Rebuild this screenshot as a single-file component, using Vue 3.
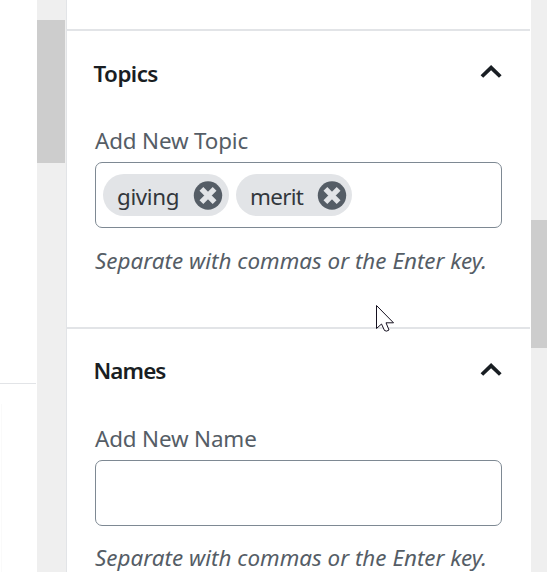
<template>
  <div class="screen">
    <!-- editor canvas, only its right edge is visible -->
    <div class="canvas">
      <div class="canvas-top"></div>
      <div class="canvas-bottom"></div>
    </div>

    <div class="scrollbar scrollbar-left">
      <div class="thumb"></div>
    </div>

    <div class="sidebar">
      <section v-for="panel in panels" :key="panel.title" class="panel" :class="panel.key">
        <button class="panel-header" @click="panel.open = !panel.open">
          <span class="panel-title">{{ panel.title }}</span>
          <svg class="arrow" :class="{ closed: !panel.open }" width="24" height="16" viewBox="0 0 24 16">
            <path d="M2.9 12.5 L12.1 3.7 L21.3 12.5" fill="none" stroke="#191e23" stroke-width="3.8" />
          </svg>
        </button>

        <div v-if="panel.open" class="panel-body">
          <label class="field-label">{{ panel.label }}</label>
          <div class="token-input">
            <span v-for="token in panel.tokens" :key="token" class="token" :class="token">
              <span class="token-text">{{ token }}</span>
              <button class="token-remove" @click="removeToken(panel, token)">
                <svg width="30" height="30" viewBox="0 0 30 30">
                  <circle cx="15" cy="15.5" r="14.2" fill="#555d66" />
                  <path d="M8.4 8.9 L21.6 22.1 M21.6 8.9 L8.4 22.1" stroke="#e2e4e7" stroke-width="5.4" />
                </svg>
              </button>
            </span>
          </div>
          <p class="help">Separate with commas or the Enter key.</p>
        </div>
      </section>
    </div>

    <div class="scrollbar scrollbar-right">
      <div class="thumb"></div>
    </div>

    <svg class="cursor" width="20" height="29" viewBox="0 0 20 29">
      <path
        d="M1.5 1.5 V24.5 L6.5 20 L9.5 26.5 Q11.5 28 14 26 L11 18.8 H18.5 Z"
        fill="#fff"
        stroke="#15101f"
        stroke-width="1"
      />
    </svg>
  </div>
</template>

<script setup>
import { reactive } from 'vue'

const panels = reactive([
  { key: 'topics', title: 'Topics', label: 'Add New Topic', tokens: ['giving', 'merit'], open: true },
  { key: 'names', title: 'Names', label: 'Add New Name', tokens: [], open: true },
])

const removeToken = (panel, token) => {
  panel.tokens = panel.tokens.filter((t) => t !== token)
}
</script>

<style>
body {
  overflow: hidden;
  background: #fff;
}
</style>

<style scoped>
.screen {
  position: relative;
  display: flex;
  width: 547px;
  height: 572px;
  overflow: hidden;
  font-family: 'Noto Sans', 'Open Sans', sans-serif;
  font-size: 22.4px;
  color: #555d66;
}

.canvas {
  width: 37px;
  flex-shrink: 0;
}

.canvas-top {
  width: 36px;
  height: 383px;
  border-bottom: 1px solid #e2e4e7;
}

.canvas-bottom {
  width: 1px;
  height: 168px;
  margin-top: 20px;
  border-right: 1px solid #fafafa;
}

.scrollbar {
  flex-shrink: 0;
  background: #efefef;
}

.thumb {
  background: #cdcdcd;
}

.scrollbar-left {
  width: 29px;
  padding-top: 20px;
  box-sizing: border-box;
}

.scrollbar-left .thumb {
  width: 28px;
  height: 143px;
}

.scrollbar-right {
  width: 16px;
  padding-top: 220px;
  box-sizing: border-box;
}

.scrollbar-right .thumb {
  height: 128px;
}

.sidebar {
  width: 463px;
  margin-right: 1px;
  padding-top: 29px;
  border-left: 1px solid #e2e4e7;
  box-sizing: content-box;
  flex-shrink: 0;
}

.panel {
  height: 298px;
  border-top: 2px solid #e2e4e7;
  box-sizing: border-box;
}

button {
  padding: 0;
  border: none;
  background: none;
  font: inherit;
  color: inherit;
  cursor: pointer;
}

.panel-header {
  display: flex;
  align-items: center;
  justify-content: space-between;
  width: 100%;
  height: 84px;
  margin-bottom: 2px;
  padding: 0 27px 0 26.5px;
}

.panel-title {
  font-weight: 600;
  letter-spacing: -0.55px;
  color: #191e23;
}

.names .panel-header {
  height: 83px;
  margin-bottom: 3px;
}

.names .panel-title {
  letter-spacing: -0.9px;
}

.arrow {
  margin-bottom: 2px;
}

.arrow.closed {
  transform: rotate(180deg);
}

.panel-body {
  padding: 8px 28px 0;
}

.field-label {
  display: block;
  height: 37px;
  line-height: 32px;
  letter-spacing: -0.15px;
  white-space: nowrap;
}

.token-input {
  display: flex;
  gap: 7px;
  width: 407px;
  height: 66px;
  padding: 11px 7px;
  border: 1px solid #7e8993;
  border-radius: 7px;
  box-sizing: border-box;
}

.token {
  display: flex;
  align-items: center;
  justify-content: space-between;
  width: 126px;
  height: 42px;
  padding: 0 6px 0 14px;
  border-radius: 21px;
  background: #e2e4e7;
  color: #32373c;
  box-sizing: border-box;
}

.token-text {
  padding-top: 2px;
  letter-spacing: -0.35px;
}

.token.merit {
  width: 116px;
  padding-right: 5.5px;
}

.merit .token-text {
  letter-spacing: -0.7px;
}

.token-remove {
  display: flex;
}

.help {
  margin: 17px 0 0;
  line-height: 32px;
  font-style: italic;
  letter-spacing: 0.02px;
  white-space: nowrap;
}

.names .help {
  margin-top: 16px;
}

.cursor {
  position: absolute;
  left: 375px;
  top: 304px;
}
</style>
